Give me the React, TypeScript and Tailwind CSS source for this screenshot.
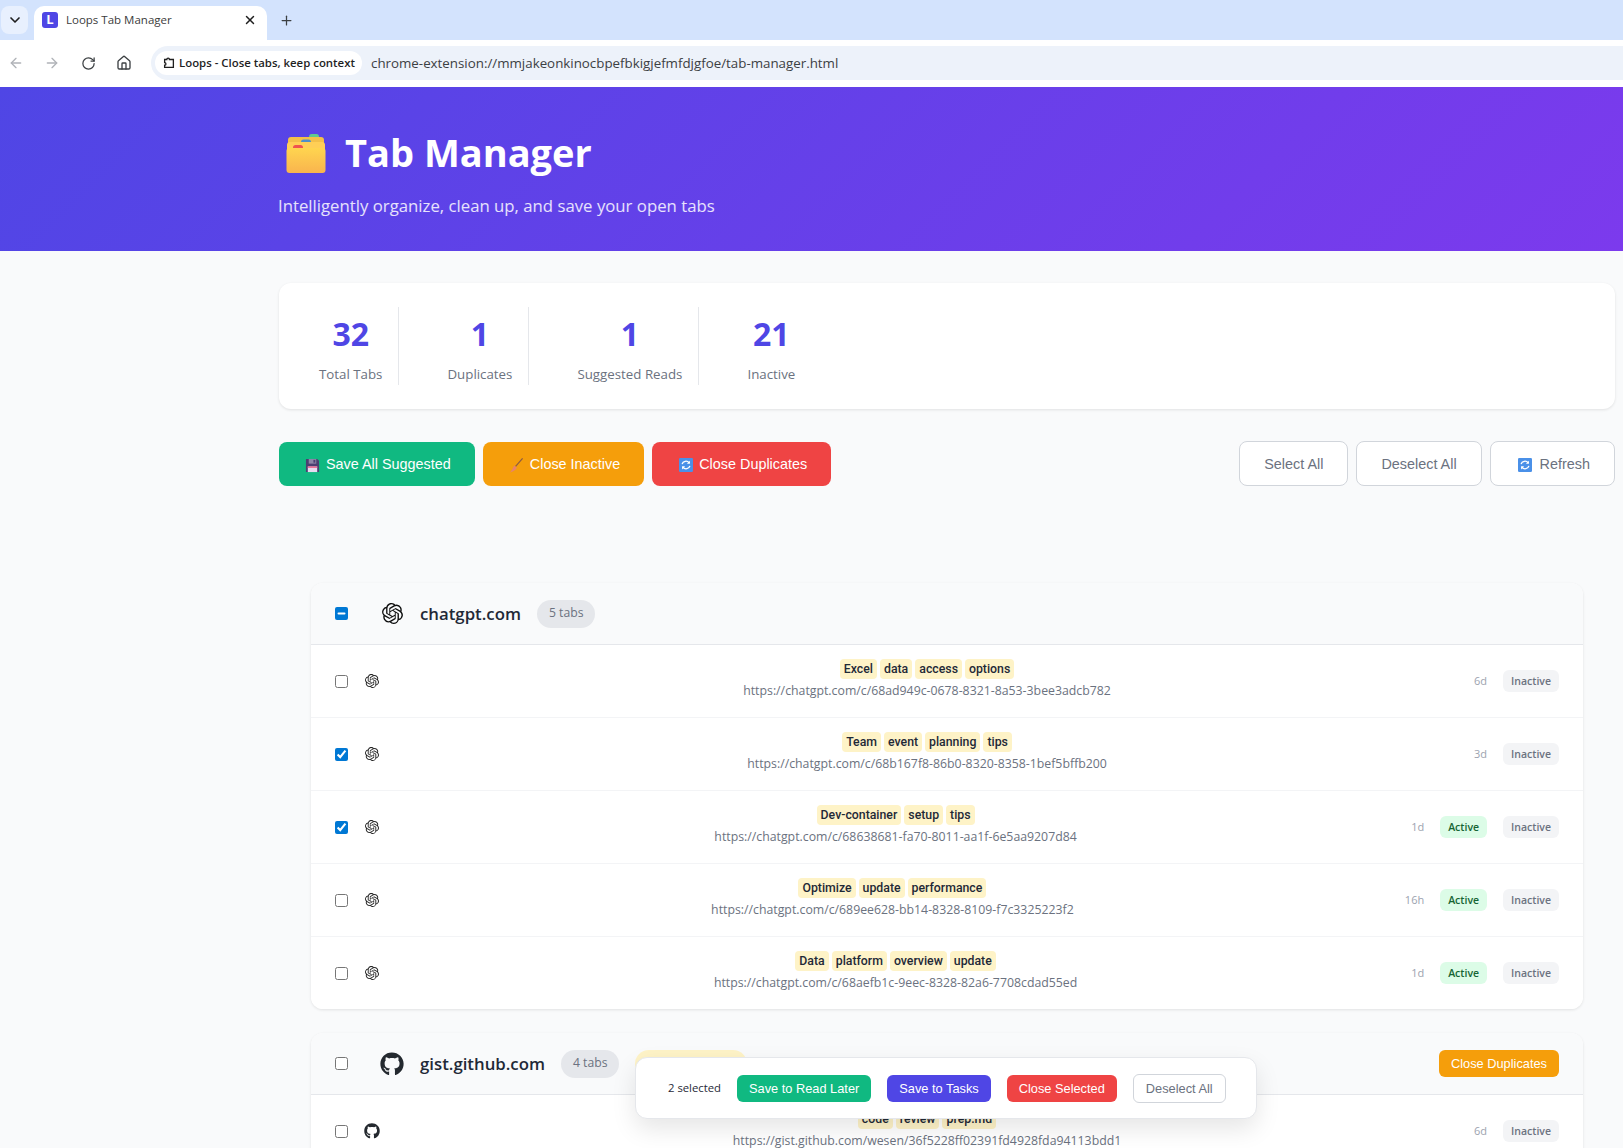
import { ArrowLeft, ArrowRight, ChevronDown, Home, Plus, RotateCw, X } from "lucide-react";
import type { ReactNode } from "react";
import { FaGithub } from "react-icons/fa";
import { SiOpenai } from "react-icons/si";

type TabRow = {
  chips: string[];
  url: string;
  age: string;
  active?: boolean;
  checked?: boolean;
  icon: ReactNode;
};

const gpt = <SiOpenai className="h-[14px] w-[14px] text-[#222]" />;

const chatgptRows: TabRow[] = [
  { chips: ["Excel", "data", "access", "options"], url: "https://chatgpt.com/c/68ad949c-0678-8321-8a53-3bee3adcb782", age: "6d", icon: gpt },
  { chips: ["Team", "event", "planning", "tips"], url: "https://chatgpt.com/c/68b167f8-86b0-8320-8358-1bef5bffb200", age: "3d", checked: true, icon: gpt },
  { chips: ["Dev-container", "setup", "tips"], url: "https://chatgpt.com/c/68638681-fa70-8011-aa1f-6e5aa9207d84", age: "1d", active: true, checked: true, icon: gpt },
  { chips: ["Optimize", "update", "performance"], url: "https://chatgpt.com/c/689ee628-bb14-8328-8109-f7c3325223f2", age: "16h", active: true, icon: gpt },
  { chips: ["Data", "platform", "overview", "update"], url: "https://chatgpt.com/c/68aefb1c-9eec-8328-82a6-7708cdad55ed", age: "1d", active: true, icon: gpt },
];

const gistRows: TabRow[] = [
  {
    chips: ["code", "review", "prep.md"],
    url: "https://gist.github.com/wesen/36f5228ff02391fd4928fda94113bdd1",
    age: "6d",
    icon: <FaGithub className="h-[16px] w-[16px] text-[#24292f]" />,
  },
];

function FolderEmoji() {
  return (
    <svg viewBox="0 0 40 40" className="h-10 w-10 shrink-0">
      <rect x="23" y="0" width="10" height="6" rx="2.5" fill="#5fc98e" />
      <rect x="2" y="3" width="36" height="14" rx="3" fill="#f3c04a" />
      <rect x="15" y="5.500" width="10" height="5" rx="2.500" fill="#4f8fc9" />
      <rect x="1" y="8" width="38" height="14" rx="3" fill="#ffcf56" />
      <rect x="7" y="11" width="10" height="5" rx="2.500" fill="#ef5350" />
      <rect x="0.500" y="14" width="39" height="25" rx="3" fill="url(#folderFill)" />
      <defs>
        <linearGradient id="folderFill" x1="0" y1="0" x2="0" y2="1">
          <stop offset="0" stopColor="#ffd54f" />
          <stop offset="1" stopColor="#f9b44e" />
        </linearGradient>
      </defs>
    </svg>
  );
}

function FloppyEmoji() {
  return (
    <svg viewBox="0 0 16 16" className="h-[15px] w-[15px] shrink-0">
      <path d="M1 1h12l2 2v12H1z" fill="#4b3f72" />
      <rect x="4" y="1" width="8" height="5" fill="#8d86a8" />
      <rect x="9" y="2" width="2" height="3" fill="#4b3f72" />
      <rect x="3" y="9" width="10" height="6" fill="#e6dcf0" />
      <rect x="3" y="9" width="10" height="1.500" fill="#f0628a" />
    </svg>
  );
}

function BroomEmoji() {
  return (
    <svg viewBox="0 0 16 16" className="h-[15px] w-[15px] shrink-0">
      <path d="M14.500 0.500 7 9" stroke="#8a5a44" strokeWidth="1.300" fill="none" />
      <path d="M5.500 8 8.500 10.500C7 13 4 15 1 15.500 3 13.500 4 11 5.500 8Z" fill="#e8836b" />
    </svg>
  );
}

function RefreshEmoji() {
  return (
    <svg viewBox="0 0 16 16" className="h-[14px] w-[14px] shrink-0">
      <rect width="16" height="16" rx="1.500" fill="#4a90e8" />
      <path d="M3.500 7a4.600 4.600 0 0 1 8-1.600M12.500 9a4.600 4.600 0 0 1-8 1.600" stroke="#fff" strokeWidth="1.500" fill="none" />
      <path d="M12.500 3v3.500H9zM3.500 13V9.500H7z" fill="#fff" />
    </svg>
  );
}

function PuzzleMark() {
  return (
    <svg viewBox="0 0 16 16" className="h-[14px] w-[14px] shrink-0" fill="none" stroke="#1f1f1f" strokeWidth="1.500">
      <path d="M3 4h2.500a1.500 1.500 0 0 1 3 0H13v9H3v-2.500a1.500 1.500 0 0 0 0-3z" />
    </svg>
  );
}

function Checkbox({ checked, mixed }: { checked?: boolean; mixed?: boolean }) {
  return (
    <input
      type="checkbox"
      readOnly
      checked={!!checked}
      ref={(el) => {
        if (el) el.indeterminate = !!mixed;
      }}
      className="h-[13px] w-[13px] shrink-0 accent-[#0078d4]"
    />
  );
}

function Row({ row }: { row: TabRow }) {
  return (
    <div className="flex h-[73px] items-center gap-4 border-b border-[#f3f4f6] bg-white px-6 last:h-[72px] last:border-b-0">
      <Checkbox checked={row.checked} />
      <div className="flex w-4 shrink-0 justify-center">{row.icon}</div>
      <div className="flex min-w-0 flex-1 flex-col items-center gap-[2px] pb-[2px]">
        <div className="flex gap-[3px] font-['Roboto',sans-serif]">
          {row.chips.map((chip) => (
            <span key={chip} className="flex h-5 items-center rounded-[4px] bg-[#fef3c7] px-1 text-[12.300px] font-medium text-[#1f2937]">
              {chip}
            </span>
          ))}
        </div>
        <div className="text-[12.300px] leading-5 text-[#6b7280]">{row.url}</div>
      </div>
      <div className="flex items-center gap-4">
        <span className="text-[11px] text-[#9ca3af]">{row.age}</span>
        {row.active && (
          <span className="flex h-[22px] items-center rounded-md bg-[#dcfce7] px-2 pt-[1px] text-[10.500px] font-semibold text-[#166534]">Active</span>
        )}
        <span className="flex h-[22px] items-center rounded-md bg-[#f3f4f6] px-2 pt-[1px] text-[10.500px] font-semibold text-[#6b7280]">Inactive</span>
      </div>
    </div>
  );
}

function Stat({ value, label, last }: { value: string; label: string; last?: boolean }) {
  return (
    <div className={`flex h-[78px] flex-col items-center justify-between px-4 pb-[1px] pt-[5px] ${last ? "" : "border-r border-[#e5e7eb]"}`}>
      <div className="text-[32px] font-bold leading-[44px] text-[#4f46e5]">{value}</div>
      <div className="text-[13.300px] leading-5 text-[#6b7280]">{label}</div>
    </div>
  );
}

export default function App() {
  return (
    <div className="relative h-[1148px] overflow-hidden bg-[#f9fafb] font-['Open_Sans',sans-serif]">
      {/* Browser chrome */}
      <div className="flex h-10 items-end bg-[#d3e3fd] pl-[1px]">
        <div className="mb-[6px] flex h-7 w-[27px] items-center justify-center rounded-lg bg-[#e8f0fe]">
          <ChevronDown className="h-4 w-4 text-[#1f1f1f]" strokeWidth={2.500} />
        </div>
        <div className="ml-[6px] flex h-[34px] w-[233px] items-center rounded-t-[10px] bg-white pb-[6px] pl-2 pr-[10px]">
          <span className="flex h-4 w-4 items-center justify-center rounded-[3px] bg-[#4f46e5] text-[13px] font-bold text-white">L</span>
          <span className="ml-2 flex-1 text-[11.500px] text-[#3c3c3c]">Loops Tab Manager</span>
          <X className="h-[14px] w-[14px] text-[#1f1f1f]" strokeWidth={2.500} />
        </div>
        <Plus className="mb-[12px] ml-3 h-[15px] w-[15px] text-[#3c4043]" strokeWidth={2} />
      </div>
      <div className="flex h-[47px] items-center bg-white pb-[1px]">
        <div className="flex w-[151px] items-center gap-[20px] pl-2">
          <ArrowLeft className="h-[16px] w-[16px] text-[#b0b3b8]" />
          <ArrowRight className="h-[16px] w-[16px] text-[#b0b3b8]" />
          <RotateCw className="ml-[1px] h-[15px] w-[15px] text-[#3c4043]" />
          <Home className="h-[16px] w-[16px] text-[#3c4043]" />
        </div>
        <div className="flex h-[34px] flex-1 items-center rounded-l-[17px] bg-[#edf2fa] pl-[4px]">
          <div className="flex h-[24px] w-[207px] items-center gap-[3px] rounded-xl bg-white pl-[7px]">
            <PuzzleMark />
            <span className="whitespace-nowrap text-[11.400px] font-semibold text-[#1f1f1f]">Loops - Close tabs, keep context</span>
          </div>
          <span className="ml-[9px] pt-[1px] text-[13.330px] text-[#3c4043]">chrome-extension://mmjakeonkinocbpefbkigjefmfdjgfoe/tab-manager.html</span>
        </div>
      </div>

      {/* Hero */}
      <header className="h-[164px] bg-[linear-gradient(135deg,#4f46e5,#7c3aed)] pl-[278px] pt-[47px]">
        <div className="flex h-10 items-center gap-[19px] pl-[8px]">
          <FolderEmoji />
          <h1 className="mb-1 text-[38px] font-bold leading-10 text-white">Tab Manager</h1>
        </div>
        <p className="mt-5 text-[16.750px] leading-6 text-white/85">Intelligently organize, clean up, and save your open tabs</p>
      </header>

      <main className="pl-[279px] pr-2 pt-8">
        {/* Stats */}
        <section className="flex gap-8 rounded-xl bg-white p-6 shadow-[0_1px_3px_rgba(0,0,0,0.1)]">
          <Stat value="32" label="Total Tabs" />
          <Stat value="1" label="Duplicates" />
          <Stat value="1" label="Suggested Reads" />
          <Stat value="21" label="Inactive" last />
        </section>

        {/* Actions */}
        <div className="mt-8 flex items-center justify-between font-['Liberation_Sans',Arial,sans-serif] text-[14.400px]">
          <div className="flex gap-2 text-white">
            <button className="flex h-11 items-center gap-[6px] rounded-lg bg-[#10b981] px-6 pt-[3px]">
              <span className="flex w-[17px] justify-end"><FloppyEmoji /></span>
              Save All Suggested
            </button>
            <button className="flex h-11 items-center gap-[6px] rounded-lg bg-[#f59e0b] px-6 pt-[3px]">
              <span className="flex w-[17px] justify-end"><BroomEmoji /></span>
              Close Inactive
            </button>
            <button className="flex h-11 items-center gap-[6px] rounded-lg bg-[#ef4444] px-6 pt-[3px]">
              <span className="flex w-[17px] justify-end"><RefreshEmoji /></span>
              Close Duplicates
            </button>
          </div>
          <div className="flex gap-2 text-[#6b7280]">
            <button className="h-[45px] rounded-lg border border-[#d1d5db] bg-white px-6 pt-[3px]">Select All</button>
            <button className="h-[45px] rounded-lg border border-[#d1d5db] bg-white px-6 pt-[3px]">Deselect All</button>
            <button className="flex h-[45px] items-center gap-2 rounded-lg border border-[#d1d5db] bg-white pl-[27px] pr-6 pt-[3px]">
              <RefreshEmoji />
              Refresh
            </button>
          </div>
        </div>

        {/* Domain groups */}
        <div className="mx-8 mt-[97px] flex flex-col gap-6">
          <section className="overflow-hidden rounded-xl bg-white shadow-[0_1px_3px_rgba(0,0,0,0.1)]">
            <div className="flex h-[62px] items-center border-b border-[#e5e7eb] bg-[#f9fafb] px-6">
              <Checkbox mixed />
              <div className="ml-[32px] flex w-6 justify-center">
                <SiOpenai className="h-[21px] w-[21px] text-[#111]" />
              </div>
              <span className="ml-4 pt-[1px] text-[16.800px] font-semibold text-[#1f2937]">chatgpt.com</span>
              <span className="ml-4 flex h-[28px] items-center rounded-full bg-[#e5e7eb] px-3 text-[12.200px] text-[#6b7280]">5 tabs</span>
            </div>
            {chatgptRows.map((row) => (
              <Row key={row.url} row={row} />
            ))}
          </section>

          <section className="overflow-hidden rounded-xl bg-white shadow-[0_1px_3px_rgba(0,0,0,0.1)]">
            <div className="flex h-[62px] items-center border-b border-[#e5e7eb] bg-[#f9fafb] px-6">
              <Checkbox />
              <div className="ml-[32px] flex w-6 justify-center">
                <FaGithub className="h-6 w-6 text-[#24292f]" />
              </div>
              <span className="ml-4 pt-[1px] text-[16.800px] font-semibold text-[#1f2937]">gist.github.com</span>
              <span className="ml-4 flex h-[28px] items-center rounded-full bg-[#e5e7eb] px-3 text-[12.200px] text-[#6b7280]">4 tabs</span>
              <span className="ml-4 flex h-[28px] w-[112px] items-center rounded-full bg-[#fef3c7] px-3 text-[12px] text-[#92400e]">1 duplicate</span>
              <button className="ml-auto h-[27px] rounded-md bg-[#f59e0b] px-3 font-['Liberation_Sans',Arial,sans-serif] text-[12.800px] text-white">Close Duplicates</button>
            </div>
            {gistRows.map((row) => (
              <Row key={row.url} row={row} />
            ))}
          </section>
        </div>
      </main>

      {/* Selection bar */}
      <div className="absolute left-[635px] top-[1057px] flex h-[62px] w-[622px] items-center gap-4 rounded-xl border border-[#e5e7eb] bg-white px-8 shadow-[0_10px_25px_rgba(0,0,0,0.1)]">
        <span className="shrink-0 whitespace-nowrap text-[11.300px] text-[#1f2937]">2 selected</span>
        <div className="flex items-center gap-4 whitespace-nowrap font-['Liberation_Sans',Arial,sans-serif] text-[12.800px] text-white">
          <button className="h-[27px] shrink-0 rounded-md bg-[#10b981] px-3 pt-[1px]">Save to Read Later</button>
          <button className="h-[27px] shrink-0 rounded-md bg-[#4f46e5] px-3 pt-[1px]">Save to Tasks</button>
          <button className="h-[27px] shrink-0 rounded-md bg-[#ef4444] px-3 pt-[1px]">Close Selected</button>
          <button className="h-[29px] shrink-0 rounded-md border border-[#d1d5db] bg-white px-3 pt-[1px] text-[#6b7280]">Deselect All</button>
        </div>
      </div>
    </div>
  );
}
